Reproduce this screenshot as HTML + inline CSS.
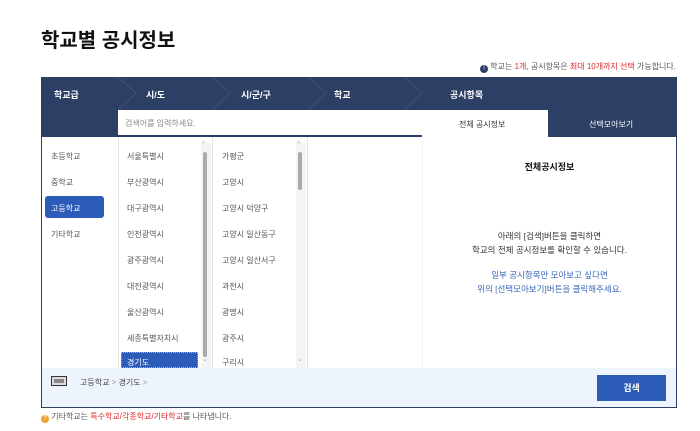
<!DOCTYPE html>
<html><head><meta charset="utf-8"><style>
*{margin:0;padding:0;box-sizing:border-box}
body{width:700px;height:431px;background:#fff;font-family:"Liberation Sans","Noto Sans CJK KR",sans-serif;position:relative;overflow:hidden;color:#333}
.a{position:absolute;white-space:nowrap}
.s{font-size:8px;color:#555}
.r{color:#e0262a}
.list div{position:absolute;font-size:8px;color:#555;white-space:nowrap}
</style></head><body>
<div class="a" style="left:41px;top:24px;font-size:20px;font-weight:bold;color:#111">학교별 공시정보</div>
<div class="a s" style="right:24px;top:61px"><span style="display:inline-block;width:8px;height:8px;border-radius:50%;background:#2e3f66;color:#fff;font-size:6px;text-align:center;line-height:8px;vertical-align:-1px">!</span> 학교는 <span class="r">1개</span>, 공시항목은 <span class="r">최대 10개까지 선택</span> 가능합니다.</div>

<div class="a" style="left:41px;top:77px;width:636px;height:331px;border:1px solid #2e3f66;background:#fff"></div>
<div class="a" style="left:41px;top:77px;width:636px;height:60px;background:#2e3f66"></div>
<svg class="a" style="left:41px;top:77px" width="636" height="60">
<g fill="none" stroke="#3f4f76" stroke-width="1">
<path d="M77 0 L95 16 L77 33"/><path d="M171 0 L189 16 L171 33"/><path d="M267 0 L285 16 L267 33"/><path d="M363 0 L381 16 L363 33"/>
</g></svg>
<div class="a" style="left:54px;top:88px;font-size:9px;color:#fff;font-weight:bold">학교급</div>
<div class="a" style="left:146px;top:88px;font-size:9px;color:#fff;font-weight:bold">시/도</div>
<div class="a" style="left:241px;top:88px;font-size:9px;color:#fff;font-weight:bold">시/군/구</div>
<div class="a" style="left:334px;top:88px;font-size:9px;color:#fff;font-weight:bold">학교</div>
<div class="a" style="left:450px;top:88px;font-size:9px;color:#fff;font-weight:bold">공시항목</div>

<div class="a" style="left:118px;top:110px;width:304px;height:25px;background:#fff"></div>
<div class="a s" style="left:125px;top:118px;color:#888">검색어를 입력하세요.</div>
<div class="a" style="left:422px;top:110px;width:126px;height:27px;background:#fff"></div>
<div class="a s" style="left:459px;top:119px;color:#333">전체 공시정보</div>
<div class="a s" style="left:589px;top:119px;color:#fff">선택모아보기</div>

<div class="a" style="left:42px;top:137px;width:634px;height:231px;background:#fff"></div>
<div class="a" style="left:118px;top:137px;width:1px;height:231px;background:#e6e6e6"></div>
<div class="a" style="left:212px;top:137px;width:1px;height:231px;background:#e6e6e6"></div>
<div class="a" style="left:307px;top:137px;width:1px;height:231px;background:#e6e6e6"></div>
<div class="a" style="left:422px;top:137px;width:1px;height:231px;background:#eef0f4"></div>

<div class="list">
<div style="left:51px;top:151px">초등학교</div>
<div style="left:51px;top:177px">중학교</div>
<div style="left:45px;top:196px;width:59px;height:22px;background:#2d5cb8;border-radius:3px"></div>
<div style="left:51px;top:203px;color:#fff">고등학교</div>
<div style="left:51px;top:229px">기타학교</div>

<div style="left:127px;top:151px">서울특별시</div>
<div style="left:127px;top:177px">부산광역시</div>
<div style="left:127px;top:203px">대구광역시</div>
<div style="left:127px;top:229px">인천광역시</div>
<div style="left:127px;top:255px">광주광역시</div>
<div style="left:127px;top:281px">대전광역시</div>
<div style="left:127px;top:307px">울산광역시</div>
<div style="left:127px;top:333px">세종특별자치시</div>
<div style="left:121px;top:352px;width:77px;height:16px;background:#2d5cb8;border:1px dotted #9bb"></div>
<div style="left:127px;top:357px;color:#fff">경기도</div>

<div style="left:222px;top:151px">가평군</div>
<div style="left:222px;top:177px">고양시</div>
<div style="left:222px;top:203px">고양시 덕양구</div>
<div style="left:222px;top:229px">고양시 일산동구</div>
<div style="left:222px;top:255px">고양시 일산서구</div>
<div style="left:222px;top:281px">과천시</div>
<div style="left:222px;top:307px">광명시</div>
<div style="left:222px;top:333px">광주시</div>
<div style="left:222px;top:357px">구리시</div>
</div>
<div class="a" style="left:201px;top:143px;width:10px;height:225px;background:#f4f4f4"></div>
<div class="a" style="left:203px;top:152px;width:4px;height:205px;background:#aaa;border-radius:2px"></div>
<div class="a" style="left:296px;top:143px;width:10px;height:225px;background:#f4f4f4"></div>
<div class="a" style="left:298px;top:152px;width:4px;height:38px;background:#aaa;border-radius:2px"></div>
<div class="a" style="left:202px;top:141px;font-size:7px;color:#aaa">^</div>
<div class="a" style="left:297px;top:141px;font-size:7px;color:#aaa">^</div>
<div class="a" style="left:202px;top:355px;font-size:7px;color:#aaa">⌄</div>
<div class="a" style="left:297px;top:355px;font-size:7px;color:#aaa">⌄</div>

<div class="a" style="left:423px;top:160px;width:253px;text-align:center;font-size:9px;font-weight:bold;color:#111">전체공시정보</div>
<div class="a" style="left:423px;top:229px;width:253px;text-align:center;font-size:8.5px;color:#333;line-height:14px;white-space:normal">아래의 [검색]버튼을 클릭하면<br>학교의 전체 공시정보를 확인할 수 있습니다.</div>
<div class="a" style="left:423px;top:268px;width:253px;text-align:center;font-size:8.5px;color:#3a68b8;line-height:14px;white-space:normal">일부 공시항목만 모아보고 싶다면<br>위의 [선택모아보기]버튼을 클릭해주세요.</div>

<div class="a" style="left:42px;top:368px;width:634px;height:39px;background:#eef4fb"></div>
<div class="a" style="left:51px;top:376px;width:16px;height:10px;border:1px solid #333;background:#ddd"><div style="margin:2px;height:4px;background:#888"></div></div>
<div class="a s" style="left:80px;top:377px;color:#444">고등학교 <span style="color:#999">&gt;</span> 경기도 <span style="color:#999">&gt;</span></div>
<div class="a" style="left:597px;top:375px;width:69px;height:26px;background:#2d5cb8;color:#fff;font-size:9px;font-weight:bold;text-align:center;line-height:26px">검색</div>

<div class="a s" style="left:41px;top:411px"><span style="display:inline-block;width:8px;height:8px;border-radius:50%;background:#f0a030;color:#fff;font-size:6px;text-align:center;line-height:8px;vertical-align:-1px">?</span> 기타학교는 <span class="r">특수학교/각종학교/기타학교</span>를 나타냅니다.</div>
</body></html>
